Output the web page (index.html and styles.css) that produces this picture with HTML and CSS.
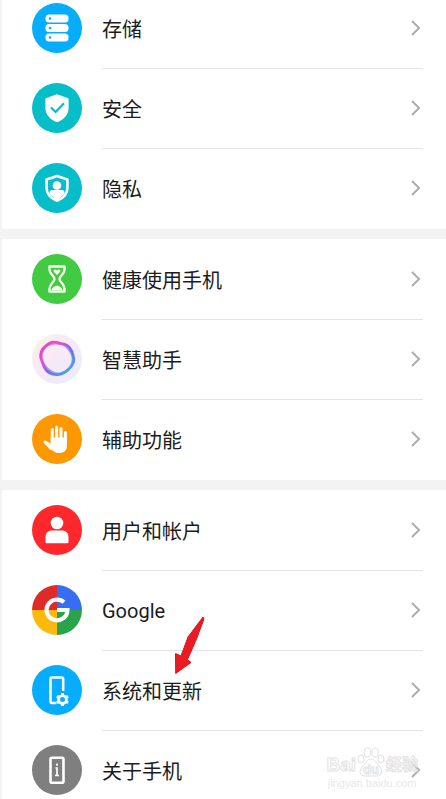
FILE: index.html
```html
<!DOCTYPE html>
<html lang="zh-CN">

<head>
    <meta charset="UTF-8">
    <meta name="viewport" content="width=device-width, initial-scale=1">
    <title>设置</title>
    <link rel="stylesheet" href="styles.css">
</head>

<body>
    <main class="settings">
        <ul class="group group-first">
            <li>
                <a href="#" class="row">
                    <svg class="icon" viewBox="0 0 50 50" aria-hidden="true">
                        <circle cx="25" cy="25" r="25" fill="#06adfc"/>
                        <g fill="#fff">
                            <rect x="13.5" y="11.5" width="23" height="8" rx="3.5"/>
                            <rect x="13.5" y="21" width="23" height="8" rx="3.5"/>
                            <rect x="13.5" y="30.5" width="23" height="8" rx="3.5"/>
                        </g>
                        <g fill="#06adfc">
                            <circle cx="18" cy="15.5" r="1.3"/>
                            <circle cx="18" cy="25" r="1.3"/>
                            <circle cx="18" cy="34.5" r="1.3"/>
                        </g>
                    </svg>
                    <span class="label"><span>存储</span><svg class="arrow" viewBox="0 0 10 16" aria-hidden="true"><path d="M1 1l7 7-7 7"/></svg></span>
                </a>
            </li>
            <li>
                <a href="#" class="row">
                    <svg class="icon" viewBox="0 0 50 50" aria-hidden="true">
                        <circle cx="25" cy="25" r="25" fill="#06bec7"/>
                        <path d="M25 11.2L35.6 15q1 .4 1 1.4V25c0 7-5 11.7-11.6 14.2C18.4 36.7 13.4 32 13.4 25v-8.600q0-1 1-1.400z" fill="#fff"/>
                        <path d="M19 24.5l4.700 4.500 8.300-8.700" fill="none" stroke="#06bec7" stroke-width="2.2"/>
                    </svg>
                    <span class="label"><span>安全</span><svg class="arrow" viewBox="0 0 10 16" aria-hidden="true"><path d="M1 1l7 7-7 7"/></svg></span>
                </a>
            </li>
            <li>
                <a href="#" class="row">
                    <svg class="icon" viewBox="0 0 50 50" aria-hidden="true">
                        <circle cx="25" cy="25" r="25" fill="#06bdca"/>
                        <path d="M25 12.9L35.4 16.5V25c0 6.5-4.5 10.5-10.4 12.8C19.1 35.5 14.6 31.5 14.6 25v-8.500z" fill="none" stroke="#fff" stroke-width="2.6" stroke-linejoin="round"/>
                        <circle cx="25" cy="22.5" r="4.3" fill="#fff"/>
                        <path d="M17.5 31v-1.500q0-2.500 2.500-2.500h10q2.500 0 2.500 2.500V31L25 37z" fill="#fff"/>
                    </svg>
                    <span class="label"><span>隐私</span><svg class="arrow" viewBox="0 0 10 16" aria-hidden="true"><path d="M1 1l7 7-7 7"/></svg></span>
                </a>
            </li>
        </ul>

        <ul class="group">
            <li>
                <a href="#" class="row">
                    <svg class="icon" viewBox="0 0 50 50" aria-hidden="true">
                        <circle cx="25" cy="25" r="25" fill="#42ca42"/>
                        <path d="M17.5 12.5h15v3c0 4.500-5 6.500-5 9.500s5 5 5 9.500v3h-15v-3c0-4.500 5-6.500 5-9.500s-5-5-5-9.500z" fill="none" stroke="#f4ffec" stroke-width="2.4" stroke-linejoin="round"/>
                        <path d="M25 21l-3-3c-1.500-2 1.500-3.500 3-1.500 1.500-2 4.500-.5 3 1.500zM19.500 36c.5-2.500 2.500-3.500 5.500-4.500 3 1 5 2 5.500 4.500z" fill="#f4ffec"/>
                    </svg>
                    <span class="label"><span>健康使用手机</span><svg class="arrow" viewBox="0 0 10 16" aria-hidden="true"><path d="M1 1l7 7-7 7"/></svg></span>
                </a>
            </li>
            <li>
                <a href="#" class="row">
                    <svg class="icon" viewBox="0 0 50 50" aria-hidden="true">
                        <defs>
                            <linearGradient id="ring" x1="0" y1="0" x2="1" y2="1">
                                <stop offset="0" stop-color="#f03fae"/>
                                <stop offset=".3" stop-color="#e34fd6"/>
                                <stop offset=".58" stop-color="#6e6fe8"/>
                                <stop offset="1" stop-color="#38b5f2"/>
                            </linearGradient>
                            <linearGradient id="halo" x1="0" y1="0" x2="1" y2="1">
                                <stop offset="0" stop-color="#fdf0e9"/>
                                <stop offset=".5" stop-color="#f6e9f8"/>
                                <stop offset="1" stop-color="#e9eefc"/>
                            </linearGradient>
                        </defs>
                        <circle cx="25" cy="25" r="25" fill="url(#halo)"/>
                        <path d="M18 9c4-2.500 7-.5 11 .5 6 .5 9 3 11 8 1 4 3 6 1.500 11-1.500 5-4 6-7.500 9-4 3-9 4-14 2.500-4-1.500-7-4-8.500-8.500-1-4-3.500-6-3-10.500.6-5 4-9 9.500-12z" fill="none" stroke="url(#ring)" stroke-width="2.6"/>
                        <path d="M15 11.500c4-3 10-2.500 15-1.500 5 1 7 5 9.500 9 2 4 2 8 0 12-2 4-6 7.500-11 8.500-5 1-9-1-12.500-4-4-4-6.500-8-6.500-13 0-4 1.500-8 5.500-11z" fill="none" stroke="url(#ring)" stroke-width="2.6" opacity=".7"/>
                    </svg>
                    <span class="label"><span>智慧助手</span><svg class="arrow" viewBox="0 0 10 16" aria-hidden="true"><path d="M1 1l7 7-7 7"/></svg></span>
                </a>
            </li>
            <li>
                <a href="#" class="row">
                    <svg class="icon" viewBox="0 0 50 50" aria-hidden="true">
                        <circle cx="25" cy="25" r="25" fill="#fe9800"/>
                        <g fill="none" stroke="#fff" stroke-width="3" stroke-linecap="round">
                            <path d="M20.2 27V15.500M24.600 27V13M29 27V14.500M33.400 28V18.500M13 28l6 6.500"/>
                        </g>
                        <path d="M18.7 23.500h16.200V32c0 4.500-2.900 7-7.900 7-3.500 0-5.500-1.200-7.500-3.500L12 28.800c-.7-1.300.5-2.500 2-2l4.700 3z" fill="#fff"/>
                    </svg>
                    <span class="label"><span>辅助功能</span><svg class="arrow" viewBox="0 0 10 16" aria-hidden="true"><path d="M1 1l7 7-7 7"/></svg></span>
                </a>
            </li>
        </ul>

        <ul class="group">
            <li>
                <a href="#" class="row">
                    <svg class="icon" viewBox="0 0 50 50" aria-hidden="true">
                        <circle cx="25" cy="25" r="25" fill="#fd272c"/>
                        <circle cx="25" cy="18" r="6.3" fill="#fff"/>
                        <path d="M13.5 37v-4.500c0-4.500 2.500-7 7-7h9c4.500 0 7 2.500 7 7V37q0 1.300-1.300 1.300H14.800q-1.300 0-1.300-1.300z" fill="#fff"/>
                    </svg>
                    <span class="label"><span>用户和帐户</span><svg class="arrow" viewBox="0 0 10 16" aria-hidden="true"><path d="M1 1l7 7-7 7"/></svg></span>
                </a>
            </li>
            <li>
                <a href="#" class="row">
                    <svg class="icon" viewBox="0 0 50 50" aria-hidden="true">
                        <path d="M25 25V0A25 25 0 0 0 0 25z" fill="#e02a27"/>
                        <path d="M25 25h25A25 25 0 0 0 25 0z" fill="#366df3"/>
                        <path d="M25 25H0a25 25 0 0 0 25 25z" fill="#fbb90b"/>
                        <path d="M25 25v25a25 25 0 0 0 25-25z" fill="#2aa34c"/>
                        <path d="M32 17.300A10.400 10.400 0 1 0 35.400 25H25" fill="none" stroke="#fff" stroke-width="4.2"/>
                    </svg>
                    <span class="label"><span>Google</span><svg class="arrow" viewBox="0 0 10 16" aria-hidden="true"><path d="M1 1l7 7-7 7"/></svg></span>
                </a>
            </li>
            <li class="marked">
                <a href="#" class="row">
                    <svg class="icon" viewBox="0 0 50 50" aria-hidden="true">
                        <circle cx="25" cy="25" r="25" fill="#06adfc"/>
                        <path d="M31.2 26V14q0-1.500-1.500-1.500H20q-1.500 0-1.500 1.500v22.500q0 1.500 1.500 1.500h4.500" fill="none" stroke="#fff" stroke-width="2.5"/>
                        <circle cx="30.5" cy="34.5" r="3.9" fill="none" stroke="#fff" stroke-width="2.8"/>
                        <path d="M30.500 28v2M30.500 39v2M24.900 31.250l1.700 1M34.400 36.750l1.700 1M24.900 37.750l1.700-1M34.400 32.250l1.700-1" stroke="#fff" stroke-width="3"/>
                    </svg>
                    <span class="label"><span>系统和更新</span><svg class="arrow" viewBox="0 0 10 16" aria-hidden="true"><path d="M1 1l7 7-7 7"/></svg></span>
                </a>
                <svg class="pointer" viewBox="0 0 32 60" aria-hidden="true">
                    <path d="M29 2L14 22 7 41 1.500 38.500 1.700 58.500 17 47.500 13.500 44.500 22.500 24 30 4z"/>
                </svg>
            </li>
            <li>
                <a href="#" class="row">
                    <svg class="icon" viewBox="0 0 50 50" aria-hidden="true">
                        <circle cx="25" cy="25" r="25" fill="#7f7f7f"/>
                        <rect x="18.5" y="12.7" width="13" height="25" rx="1.5" fill="none" stroke="#fff" stroke-width="2.6"/>
                        <path d="M25 18.500v2.200M23.500 23H25v7.500M23 30.500h4" fill="none" stroke="#fff" stroke-width="1.7"/>
                    </svg>
                    <span class="label"><span>关于手机</span><svg class="arrow" viewBox="0 0 10 16" aria-hidden="true"><path d="M1 1l7 7-7 7"/></svg></span>
                </a>
            </li>
        </ul>
    </main>

    <div class="watermark">
        <div class="brand">
            <span>Bai</span>
            <span class="paw">
                <svg viewBox="0 0 28 30" aria-hidden="true">
                    <ellipse cx="4" cy="12" rx="3" ry="4"/>
                    <ellipse cx="10.5" cy="5.5" rx="3.2" ry="4.5"/>
                    <ellipse cx="18" cy="5.5" rx="3.2" ry="4.5"/>
                    <ellipse cx="24" cy="12" rx="3" ry="4"/>
                    <path d="M14 12c4 0 5 4 8 7 5 5 2 10-2 10H8c-5 0-7-5-2-10 3-3 4-7 8-7z"/>
                </svg>
                <span class="du">du</span>
            </span>
            <span class="cn">经验</span>
        </div>
        <div class="site">jingyan.baidu.com</div>
    </div>
</body>

</html>
```

FILE: styles.css
```css
* {
    box-sizing: border-box;
    margin: 0;
    padding: 0;
    list-style: none;
    text-decoration: none;
}

body {
    position: relative;
    height: 100vh;
    overflow: hidden;
    background-color: #f3f3f3;
    color: #1c1c1c;
    font-family: Roboto, "Noto Sans CJK SC", sans-serif;
    font-size: 20px;
}

.settings {
    display: flex;
    flex-direction: column;
    gap: 10px;
    padding-left: 2px;
}

.group {
    padding-top: 1px;
    background-color: #fff;
}

/* list is scrolled, first row is partly out of view */
.group-first {
    margin-top: -12px;
}

.row {
    display: flex;
    align-items: center;
    gap: 20px;
    height: 80px;
    padding: 0 23px 0 30px;
    color: #1c1c1c;
}

.icon {
    flex: none;
    width: 50px;
    height: 50px;
    margin-bottom: 2px;
}

.label {
    display: flex;
    flex: 1;
    align-items: center;
    justify-content: space-between;
    height: 100%;
    padding-right: 2px;
    border-bottom: 1px solid #e4e4e4;
}

.group li:last-child .label {
    border-bottom-color: transparent;
}

.arrow {
    width: 10px;
    height: 16px;
    margin-bottom: 2px;
    fill: none;
    stroke: #adadad;
    stroke-width: 2;
}

.marked {
    position: relative;
}

.pointer {
    position: absolute;
    left: 172px;
    top: -36px;
    width: 32px;
    height: 60px;
    fill: #e91c24;
    stroke: #d8161e;
}

/* watermark */
.watermark {
    position: absolute;
    right: 28px;
    bottom: 10px;
    color: transparent;
    text-align: center;
    pointer-events: none;
    -webkit-text-stroke: 1px #e4e4e4;
}

.brand {
    display: flex;
    align-items: flex-end;
    justify-content: center;
    gap: 1px;
    height: 32px;
    font: bold 19px/24px "Liberation Sans", "Noto Sans CJK SC", sans-serif;
}

.paw {
    position: relative;
    width: 28px;
    height: 30px;
}

.paw svg {
    display: block;
    width: 28px;
    height: 30px;
    fill: none;
    stroke: #e0e0e0;
}

.du {
    position: absolute;
    left: 0;
    right: 0;
    bottom: 0;
    font-size: 13px;
    line-height: 14px;
}

.cn {
    font-size: 16px;
}

.site {
    color: #e8e8e8;
    font: 11px/12px "Liberation Sans", sans-serif;
    -webkit-text-stroke: 0;
}
```
